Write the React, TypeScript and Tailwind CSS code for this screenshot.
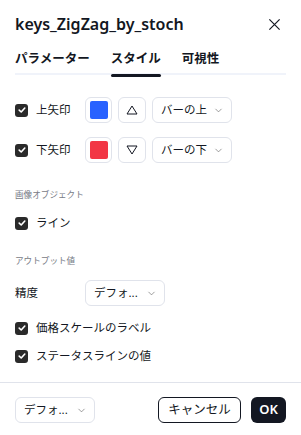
import { ChevronDown } from 'lucide-react'

const font = { fontFamily: '"Noto Sans", "Noto Sans CJK JP", sans-serif' }

function Check({ label }: { label: string }) {
    return (
        <div className="flex items-center gap-2 h-[20px]">
            <span className="w-[13px] h-[13px] rounded-[3px] bg-[#2a2a2a] flex items-center justify-center">
                <svg width="8" height="8" viewBox="0 0 10 10">
                    <path d="M1.5 5.2 L4 7.5 L8.5 2.5" fill="none" stroke="white" strokeWidth="2" strokeLinecap="round" strokeLinejoin="round" />
                </svg>
            </span>
            <span className="text-[11.5px] text-[#131722] leading-none">{label}</span>
        </div>
    )
}

function Select({ text, w }: { text: string; w: string }) {
    return (
        <div className={`${w} h-[26px] border border-[#e0e3eb] rounded-[6px] flex items-center justify-between pl-[8px] pr-[7px]`}>
            <span className="text-[11.5px] text-[#131722] leading-none">{text}</span>
            <ChevronDown size={11} strokeWidth={1.4} className="text-[#666]" />
        </div>
    )
}

function ArrowRow({ label, color, up, pos }: { label: string; color: string; up: boolean; pos: string }) {
    return (
        <div className="flex items-center h-[26px]">
            <div className="w-[70px]">
                <Check label={label} />
            </div>
            <div className="w-[27px] h-[26px] border border-[#e0e3eb] rounded-[6px] flex items-center justify-center">
                <span className="w-[18px] h-[18px] rounded-[2px]" style={{ background: color }} />
            </div>
            <div className="ml-[6px] w-[28px] h-[26px] border border-[#e0e3eb] rounded-[6px] flex items-center justify-center">
                <svg width="12" height="10" viewBox="0 0 12 10">
                    {up ? (
                        <path d="M6 1 L11 9 L1 9 Z" fill="none" stroke="#131722" strokeWidth="1" strokeLinejoin="round" />
                    ) : (
                        <path d="M6 9 L11 1 L1 1 Z" fill="none" stroke="#131722" strokeWidth="1" strokeLinejoin="round" />
                    )}
                </svg>
            </div>
            <div className="ml-[6px]">
                <Select text={pos} w="w-[80px]" />
            </div>
        </div>
    )
}

export default function App() {
    return (
        <div className="w-[301px] h-[435px] bg-white flex flex-col" style={font}>
            <div className="flex items-center justify-between px-[15px] pt-[12px] h-[36px]">
                <span className="text-[16px] font-semibold text-[#131722] leading-none">keys_ZigZag_by_stoch</span>
                <svg width="13" height="13" viewBox="0 0 14 14" className="mr-[5px]">
                    <path d="M1.5 1.5 L12.5 12.5 M12.5 1.5 L1.5 12.5" stroke="#131722" strokeWidth="1.3" />
                </svg>
            </div>

            <div className="mx-[15px] mt-[15px] relative">
                <div className="flex gap-[21px] text-[12.5px] font-semibold text-[#131722] h-[22px] items-start leading-[16px]">
                    <span>パラメーター</span>
                    <span className="relative">
                        スタイル
                        <span className="absolute left-0 right-0 top-[23px] h-[3px] rounded-full bg-[#131722]" />
                    </span>
                    <span>可視性</span>
                </div>
                <div className="h-[2px] bg-[#f0f3fa]" />
            </div>

            <div className="px-[15px] mt-[22px] flex flex-col gap-[14px]">
                <ArrowRow label="上矢印" color="#2962ff" up pos="バーの上" />
                <ArrowRow label="下矢印" color="#f23645" up={false} pos="バーの下" />
            </div>

            <div className="px-[15px] mt-[25px] h-[14px] flex items-center text-[8.6px] text-[#787b86]">画像オブジェクト</div>
            <div className="px-[15px] mt-[11px]">
                <Check label="ライン" />
            </div>

            <div className="px-[15px] mt-[21px] h-[14px] flex items-center text-[8.6px] text-[#787b86]">アウトプット値</div>
            <div className="px-[15px] mt-[12px] flex items-center">
                <span className="w-[70px] text-[11.5px] text-[#131722]">精度</span>
                <Select text="デフォ..." w="w-[80px]" />
            </div>
            <div className="px-[15px] mt-[12px]">
                <Check label="価格スケールのラベル" />
            </div>
            <div className="px-[15px] mt-[8px]">
                <Check label="ステータスラインの値" />
            </div>

            <div className="mt-[16px] h-px bg-[#e0e3eb]" />

            <div className="px-[15px] mt-[14px] flex items-center justify-between">
                <Select text="デフォ..." w="w-[80px]" />
                <div className="flex items-center gap-[10px]">
                    <button className="h-[26px] w-[83px] border border-[#131722] rounded-[6px] text-[12.5px] text-[#131722]">キャンセル</button>
                    <button className="h-[26px] w-[35px] bg-[#131722] rounded-[6px] text-[13px] font-semibold text-white">OK</button>
                </div>
            </div>
        </div>
    )
}
